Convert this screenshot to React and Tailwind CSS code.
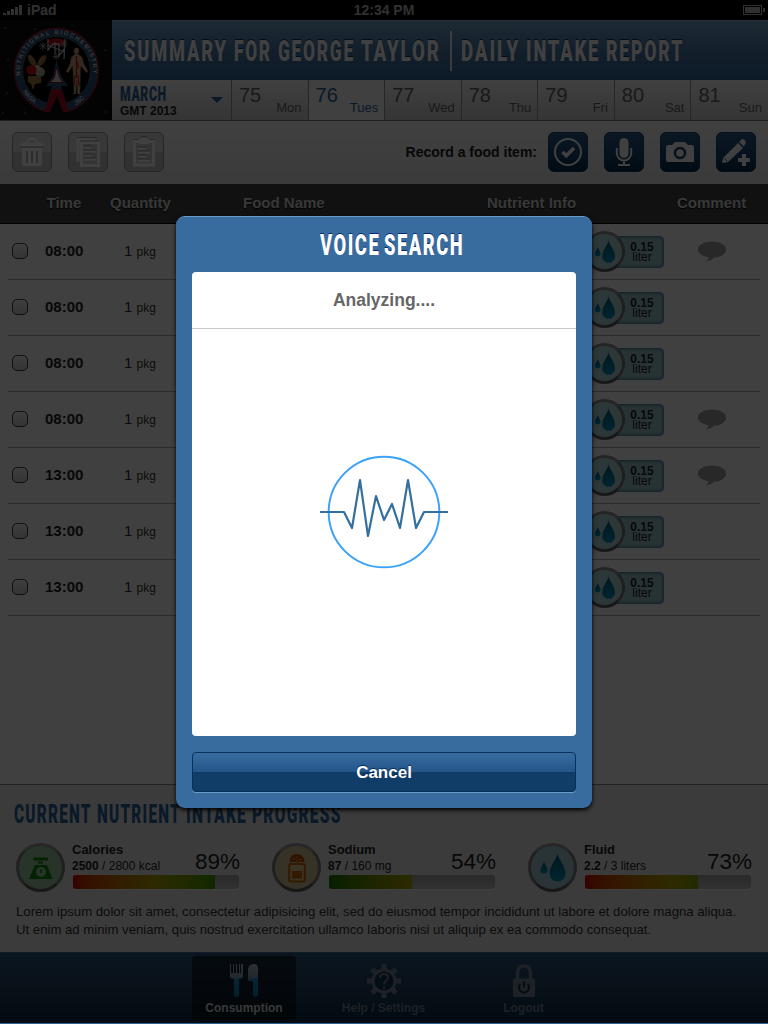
import { useLayoutEffect, useRef, useState } from "react";

/* One word of the condensed headline face, squeezed to a set width. */
function Word({ children, width, className = "" }) {
  const ref = useRef(null);
  const [scale, setScale] = useState(0.6);
  useLayoutEffect(() => {
    if (ref.current) setScale(width / ref.current.offsetWidth);
  }, [width]);
  return (
    <span className="block shrink-0 whitespace-nowrap" style={{ width }}>
      <span
        ref={ref}
        className={`block w-max origin-left whitespace-nowrap ${className}`}
        style={{ transform: `scaleX(${scale})` }}
      >
        {children}
      </span>
    </span>
  );
}

function Drops({ className }) {
  return (
    <svg viewBox="0 0 26 30" className={className}>
      <defs>
        <linearGradient id="drop" x1="0" y1="0" x2="0" y2="1">
          <stop offset="0" stopColor="#005a80" />
          <stop offset="1" stopColor="#0098b8" />
        </linearGradient>
      </defs>
      <path d="M17.5 1C19 7 25.5 13 25.5 20.500A8 8 0 0 1 9.500 20.500C9.500 13 16 7 17.500 1Z" fill="url(#drop)" />
      <path d="M4 8.500C4.600 11.500 7.500 14 7.500 17.500A3.600 3.800 0 0 1 .4 17.500C.4 14 3.400 11.500 4 8.500Z" fill="url(#drop)" />
    </svg>
  );
}

function Logo() {
  const stars = [[5, 8], [14, 22], [22, 5], [35, 9], [80, 5], [97, 12], [105, 30], [108, 55], [100, 78], [8, 40], [4, 62], [12, 80], [25, 93], [36, 96], [86, 94], [106, 92], [92, 6], [48, 3], [3, 93], [77, 97], [101, 44], [7, 73]];
  return (
    <svg viewBox="0 0 112 100" className="block h-[100px] w-28 shrink-0 bg-[#0c0e0e]">
      <defs>
        <path id="arcTop" d="M20.200 55.500A36.600 36.600 0 1 1 92.800 55.500" />
        <path id="arcLeft" d="M20 66A39.500 39.500 0 0 0 44 88.500" />
        <path id="arcRight" d="M68 88.500A39.500 39.500 0 0 0 93 66" />
      </defs>
      {stars.map(([x, y], i) => (
        <circle key={i} cx={x} cy={y} r={i % 3 ? 0.4 : 0.7} fill="#8a9090" />
      ))}
      <circle cx="56.500" cy="50.500" r="38" fill="#000" stroke="#27517c" strokeWidth="7.500" />
      <circle cx="56.500" cy="50.500" r="42" fill="none" stroke="#a01c30" strokeWidth="1.300" />
      <circle cx="56.500" cy="50.500" r="34" fill="none" stroke="#7a8290" strokeWidth=".7" />
      <g fill="#d8d8d8" fontFamily="Liberation Sans, sans-serif" fontWeight="700" fontSize="6">
        <text><textPath href="#arcTop" textLength="122">NUTRITIONAL BIOCHEMISTRY</textPath></text>
        <text><textPath href="#arcLeft" startOffset="6">NASA</textPath></text>
        <text><textPath href="#arcRight" startOffset="8">JSC</textPath></text>
      </g>
      <path d="M47 21Q56 15 65 21L62 26H51Z" fill="#c00818" />
      <path d="M48 19V31M65 19L64 39M48 25L64 32M48 30L53 24H59V36L65 28M55 22V34" fill="none" stroke="#bdc3c9" strokeWidth="1.300" />
      <path d="M43 22V30M39 26H47M40 23L46 29M46 23L40 29M56 33V40M52.500 36.500H59.500M53.500 34L58.500 39M58.500 34L53.500 39M64 20V28M60 24H68M61 21L67 27M67 21L61 27" stroke="#b8b8b8" strokeWidth=".7" />
      <g fill="#9c7440" stroke="#4c3214" strokeWidth=".5">
        <ellipse cx="32" cy="40.500" rx="3" ry="6.500" transform="rotate(-32 32 40.500)" />
        <ellipse cx="42" cy="40.500" rx="3" ry="6.500" transform="rotate(35 42 40.500)" />
      </g>
      <circle cx="40" cy="52" r="5" fill="#b5aa94" />
      <circle cx="37" cy="48" r="3" fill="#c8c0aa" />
      <circle cx="31.500" cy="50" r="5" fill="#d01010" />
      <path d="M28 56H41V63L35 64L33 70L31 64L28 62Z" fill="#ad7b3c" />
      <g fill="#c6a383" stroke="#79523c" strokeWidth=".4">
        <ellipse cx="76.500" cy="31" rx="2.500" ry="3.200" />
        <path d="M75 34H78L82 37L84 44L88 51L86.500 53L81 46L80.500 53L80 73L81 74H77.500L76.800 60L76 74H73L74 72L73 53L72.500 46L68 53L66 51.500L70 44L71.500 37Z" />
      </g>
      <path d="M76.500 36V58M76.500 40L78.500 47L76 49M74 66L75 55M79 66L78 55" stroke="#c01818" strokeWidth="1.200" fill="none" />
      <path d="M56.500 40L61 56L68 66H61L69 92H44L52 66H46L53 56Z" fill="#27517c" />
      <path d="M56.500 45L60 57L64 63H49L54 57Z" fill="#901828" />
      <path d="M56.500 49L59 57L62 62H51L55 57Z" fill="#c9cdd2" />
      <path d="M52 69H61.500L69 92H44Z" fill="#a80c20" />
      <path d="M56.800 76L63.500 93H49.500Z" fill="#080a0c" />
    </svg>
  );
}

const days = [["75", "Mon"], ["76", "Tues"], ["77", "Wed"], ["78", "Thu"], ["79", "Fri"], ["80", "Sat"], ["81", "Sun"]];

function Header() {
  const w = "text-[30px] leading-[60px] font-black tracking-[3px] text-white [text-shadow:0_-1px_0_#063868]";
  return (
    <header className="flex h-[101px] border-b border-[#777]">
      <Logo />
      <div className="min-w-0 flex-1">
        <h1 className="flex h-[60px] items-center border-t border-[#98c0dc] bg-linear-to-b from-[#76a6cc] via-[#4a7cab] to-[#34689c] pl-[11.500px] font-[Roboto,sans-serif]">
          <Word width={104} className={w}>SUMMARY</Word>
          <span className="w-1.5" />
          <Word width={38} className={w}>FOR</Word>
          <span className="w-1.5" />
          <Word width={77} className={w}>GEORGE</Word>
          <span className="w-1.5" />
          <Word width={80} className={w}>TAYLOR</Word>
          <span className="mx-[9px] h-10 w-0.5 bg-[#eee]" />
          <Word width={59.5} className={w}>DAILY</Word>
          <span className="w-1.5" />
          <Word width={74} className={w}>INTAKE</Word>
          <span className="w-1.5" />
          <Word width={78} className={w}>REPORT</Word>
        </h1>
        <div className="flex h-10">
          <div className="flex w-[120px] items-center justify-between border-r border-[#999] bg-linear-to-b from-white to-[#d0d0d0] pr-2 pl-2">
            <div className="pt-px font-[Roboto,sans-serif]">
              <Word width={47} className="text-[20px] leading-[20px] font-black tracking-[1px] text-[#2a659c]">MARCH</Word>
              <div className="font-['Liberation_Sans',sans-serif] text-xs leading-[14px] font-bold text-[#222]">GMT 2013</div>
            </div>
            <span className="h-0 w-0 border-x-6 border-t-6 border-x-transparent border-t-[#2a659c]" />
          </div>
          <div className="grid flex-1 grid-cols-7">
            {days.map(([n, d], i) => (
              <div
                key={n}
                className={`relative border-[#999] pt-[5px] pl-[7px] ${i === 6 ? "" : "border-r"} ${i === 1 ? "bg-white text-[#2a659c]" : "bg-linear-to-b from-white to-[#d0d0d0] text-[#666]"}`}
              >
                <div className="text-xl leading-[21px]">{n}</div>
                <div className="absolute right-[6px] bottom-[4px] text-[13px] leading-4">{d}</div>
              </div>
            ))}
          </div>
        </div>
      </div>
    </header>
  );
}

function GreyButton({ children }) {
  return (
    <span className="block size-10 rounded-md border border-[#999] bg-linear-to-b from-[#e0e0e0] from-50% to-[#c4c4c4] to-50%">
      <svg viewBox="0 0 40 40" className="-mt-px -ml-px size-10 max-w-none">{children}</svg>
    </span>
  );
}

function BlueButton({ children }) {
  return (
    <span className="block size-10 rounded-md border border-[#0c3c68] bg-linear-to-b from-[#2c5c8c] via-[#184a78] to-[#042c48]">
      <svg viewBox="0 0 40 40" className="-mt-px -ml-px size-10 max-w-none">{children}</svg>
    </span>
  );
}

function Toolbar() {
  return (
    <div className="flex h-[63px] items-center bg-linear-to-b from-white to-[#e8e8e8] px-3 pb-px">
      <div className="flex gap-4">
        <GreyButton>
          <g fill="#fff">
            <path d="M8 14Q8 10.500 12 10.500H28Q32 10.500 32 14Z" />
            <path d="M15 10.500L17 7H23L25 10.500" fill="none" stroke="#fff" strokeWidth="2" />
            <path d="M10 16H30V32Q30 34 28 34H12Q10 34 10 32Z" />
          </g>
          <path d="M15 19V31M20 19V31M25 19V31" stroke="#aaa" strokeWidth="1.800" />
          <path d="M8 15H32" stroke="#999" />
        </GreyButton>
        <GreyButton>
          <path d="M10 30V7H27" fill="none" stroke="#fff" strokeWidth="3" />
          <path d="M13.500 10.500H30.500V33.500H13.500Z" fill="#cfcfcf" stroke="#fff" strokeWidth="3" />
          <path d="M16 15.500H23M16 19.500H28M16 23.500H24M16 27.500H28" stroke="#fff" strokeWidth="2" />
          <path d="M9 5.500H29M12 9H31M16 14H23M16 18H28M16 22H24M16 26H28" stroke="#999" />
        </GreyButton>
        <GreyButton>
          <path d="M10.500 9.500H29.500V33H10.500Z" fill="#cfcfcf" stroke="#fff" strokeWidth="3" />
          <path d="M15 7H17Q20 3 23 7H25V12H15Z" fill="#fff" />
          <path d="M14 16.500H22M14 20.500H26M14 24.500H22M14 28.500H26" stroke="#fff" strokeWidth="2" />
          <path d="M9 7.500H14M26 7.500H31M14 15H22M14 19H26M14 23H22M14 27H26M17 5.500Q20 3 23 5.500" stroke="#999" fill="none" />
        </GreyButton>
      </div>
      <span className="mr-[11px] ml-auto text-sm font-bold text-[#222]">Record a food item:</span>
      <div className="flex gap-4">
        <BlueButton>
          <circle cx="20" cy="20" r="13" fill="none" stroke="#fff" strokeWidth="2" />
          <path d="M14.500 20L18.300 23.700L26 16" fill="none" stroke="#fff" strokeWidth="3.600" />
        </BlueButton>
        <BlueButton>
          <rect x="15.500" y="6" width="9" height="20" rx="4.500" fill="#fff" />
          <path d="M12.800 16V21A7.200 7.500 0 0 0 27.200 21V16M20 29V33M14 33H26" fill="none" stroke="#fff" strokeWidth="2" />
        </BlueButton>
        <BlueButton>
          <path d="M6 15.500Q6 13 8.500 13H12L15 10H25L28 13H31.500Q34 13 34 15.500V30H8Q6 30 6 28Z" fill="#fff" />
          <circle cx="20" cy="21" r="5" fill="#fff" stroke="#123f68" strokeWidth="2.400" />
        </BlueButton>
        <BlueButton>
          <path d="M6 30L7.500 25.500L22 11L27 16L12 30L7 31ZM23 10L25.500 7.500Q27 6.500 28.500 8L29.500 9.500Q30 11 29 12.500L27.800 14.500Z" fill="#fff" />
          <path d="M8.500 26.500L11 29" stroke="#123f68" />
          <path d="M28 22V34M22 28H34" stroke="#fff" strokeWidth="4" />
        </BlueButton>
      </div>
    </div>
  );
}

const rows = [["08:00", true], ["08:00", false], ["08:00", false], ["08:00", true], ["13:00", true], ["13:00", false], ["13:00", false]];

function IntakeTable() {
  return (
    <div>
      <div className="flex h-10 items-center border-b border-black bg-[#444] text-[15px] font-bold text-[#e0e0e0] [text-shadow:0_1px_1px_#000]">
        <span className="ml-[46.500px] w-[63.500px]">Time</span>
        <span className="w-[133px]">Quantity</span>
        <span className="w-[244px]">Food Name</span>
        <span className="w-[190px]">Nutrient Info</span>
        <span>Comment</span>
      </div>
      {rows.map(([time, comment], i) => (
        <div key={i} className="mx-2 flex h-14 items-center border-b border-[#aaa] pl-1 text-[#222]">
          <span className="mb-px size-4 rounded-[5px] border border-[#444] bg-linear-to-b from-[#f8f8f8] to-[#cfcfcf]" />
          <span className="mb-px ml-[17px] w-[79px] text-[15px] leading-5 font-bold">{time}</span>
          <span className="mb-px w-[460px] text-[15px] leading-5 text-[#333]">1 <span className="text-xs leading-none">pkg</span></span>
          <span className="flex items-center">
            <span className="z-1 flex size-[41px] items-center justify-center rounded-full border-3 border-[#7c7c7c] border-t-[#949494] border-b-[#606060] bg-[#b4dce0]">
              <Drops className="h-6 w-[22px]" />
            </span>
            <span className="-ml-5 flex h-8 w-[59px] flex-col items-center rounded border border-[#66919c] bg-[#9cc8d4] pt-[5px] pl-[15px] text-xs leading-[10px] shadow-[inset_0_0_3px_#456f7a]">
              <b>0.15</b>
              <span>liter</span>
            </span>
          </span>
          {comment && (
            <svg viewBox="0 0 28 21" className="ml-[34px] h-[21px] w-7">
              <path d="M14 0.500C22 .5 28 4 28 8.500C28 13 23 16.400 16 16.600C14.500 18.500 11.500 20.300 8 20.500C10 19 10.500 17.500 10.500 16.200C4 15.200 0 12.400 0 8.500C0 4 6 .5 14 .5Z" fill="#a0a0a0" />
            </svg>
          )}
        </div>
      ))}
    </div>
  );
}

function Nutrient({ name, value, total, percent, ring, icon, fill, bar }) {
  return (
    <div className="flex h-[50px] w-56">
      <span className={`mt-px flex size-[49px] shrink-0 items-center justify-center rounded-full border-3 border-[#808080] border-t-[#9c9c9c] border-b-[#606060] ${ring}`}>{icon}</span>
      <div className="ml-[7px] w-[168px]">
        <div className="text-[13px] leading-4 font-bold text-[#222]">{name}</div>
        <div className="flex h-4 items-end justify-between text-[#222]">
          <span className="text-xs leading-4"><b>{value}</b> / {total}</span>
          <span className="text-[22.500px] leading-[24px]">{percent}</span>
        </div>
        <div className="mt-px ml-px h-3.5 w-[166px] overflow-hidden rounded-[3px] bg-linear-to-b from-[#a8a8a8] to-[#c4c4c4] shadow-[0_1px_0_#fff]">
          <div className={`h-full ${bar}`} style={{ width: fill }} />
        </div>
      </div>
    </div>
  );
}

function Progress() {
  const w = "text-[25px] leading-[28px] font-black tracking-[2px] text-[#2a659c]";
  return (
    <section className="h-[168px] border-t border-[#888] bg-[#ececec] px-4 pt-4">
      <h2 className="-ml-0.5 flex gap-[5px] font-[Roboto,sans-serif]">
        <Word width={78} className={w}>CURRENT</Word>
        <Word width={84} className={w}>NUTRIENT</Word>
        <Word width={61} className={w}>INTAKE</Word>
        <Word width={90} className={w}>PROGRESS</Word>
      </h2>
      <div className="mt-[13px] flex gap-8">
        <Nutrient
          name="Calories" value="2500" total="2800 kcal" percent="89%" fill="85.7%" ring="bg-[#a0d0a8]"
          bar="bg-linear-to-r from-[#d40000] via-[#b0a800] via-60% to-[#3ca000]"
          icon={
            <svg viewBox="0 0 24 24" className="size-6 overflow-visible">
              <path d="M4.500 1.500H19V4.500H4.500ZM9 5.500H14V7.500H9ZM6 9H18L23.500 23H0Z" fill="#088808" />
              <circle cx="12" cy="16" r="5" fill="#9ccca4" />
              <path d="M12 13V17" stroke="#088808" strokeWidth="1.500" />
            </svg>
          }
        />
        <Nutrient
          name="Sodium" value="87" total="160 mg" percent="54%" fill="50%" ring="bg-[#dcc898]"
          bar="bg-linear-to-r from-[#107c00] to-[#b0a800]"
          icon={
            <svg viewBox="0 0 20 30" className="h-[30px] w-5">
              <path d="M2.500 9Q3 1 10 1Q17 1 17.500 9Z" fill="#c84800" />
              <path d="M6 6h1.500M9.500 4H11M12.500 6.500H14M9 7.500h1.500" stroke="#eac48c" strokeWidth="1.200" />
              <rect x="2.200" y="11" width="15.600" height="17.500" rx="2" fill="#e8c890" stroke="#c86400" strokeWidth="2" />
              <path d="M5 18H15V25.500H5Z" fill="#c86400" />
            </svg>
          }
        />
        <Nutrient
          name="Fluid" value="2.2" total="3 liters" percent="73%" fill="68%" ring="bg-[#a8d0d8]"
          bar="bg-linear-to-r from-[#d40000] via-[#b0a800] via-78% to-[#88a800]"
          icon={<Drops className="h-[30px] w-[26px]" />}
        />
      </div>
      <p className="mt-[11px] text-[13.200px] leading-[18px] tracking-[-0.010px] whitespace-nowrap text-[#333]">
        Lorem ipsum dolor sit amet, consectetur adipisicing elit, sed do eiusmod tempor incididunt ut labore et dolore magna aliqua.
        <br />
        Ut enim ad minim veniam, quis nostrud exercitation ullamco laboris nisi ut aliquip ex ea commodo consequat.
      </p>
    </section>
  );
}

function TabBar() {
  return (
    <nav className="flex h-[71px] justify-center gap-9 border-t border-[#3c6c94] bg-linear-to-b from-[#2c5880] via-[#244262] via-50% to-[#062c44] pt-[3px] text-xs font-bold text-[#708090]">
      <div className="flex h-16 w-26 flex-col items-center rounded bg-black/50 pt-[7px] text-[#ddd]">
        <svg viewBox="0 0 30 35" className="h-[35px] w-[30px]">
          <defs>
            <linearGradient id="cutlery" x1="0" y1="0" x2="0" y2="34" gradientUnits="userSpaceOnUse">
              <stop offset="0" stopColor="#b8c8d8" />
              <stop offset=".45" stopColor="#7d99b4" />
              <stop offset=".46" stopColor="#1c98d4" />
              <stop offset="1" stopColor="#087ca8" />
            </linearGradient>
          </defs>
          <path d="M1 1H2V10H4V1H5V10H7V1H8V10H10V1H11V10H12V1H14V13Q14 16 10 16V32Q10 34 7.500 34Q5 34 5 32V16Q1 16 1 13ZM19 18V7Q19 1 25 1Q29 1 29 5V31Q29 34 26.500 34Q24 34 24 31V18Z" fill="url(#cutlery)" />
        </svg>
        <span className="mt-[3px] leading-[14px]">Consumption</span>
      </div>
      <div className="flex h-16 w-26 flex-col items-center pt-[7px]">
        <svg viewBox="0 0 34 34" className="mt-px h-[34px] w-[34px]">
          <g stroke="#788494" strokeWidth="5">
            <path d="M17 0V34M0 17H34M5 5L29 29M29 5L5 29" />
          </g>
          <circle cx="17" cy="17" r="11" fill="#163550" stroke="#788494" strokeWidth="3" />
          <path d="M13 14Q13 10 17 10Q21 10 21 13.500Q21 15.500 18.800 17Q17 18.300 17 20.500M17 22.500V25" fill="none" stroke="#788494" strokeWidth="1.800" />
        </svg>
        <span className="mt-[3px] -ml-px leading-[14px]">Help / Settings</span>
      </div>
      <div className="flex h-16 w-26 flex-col items-center pt-[7px]">
        <svg viewBox="0 0 24 34" className="mt-px h-[34px] w-6">
          <path d="M5.500 16V9Q5.500 2 12 2Q18.500 2 18.500 9V16" fill="none" stroke="#788494" strokeWidth="3.500" />
          <rect x="1" y="14.500" width="22" height="18.500" rx="1.500" fill="#788494" />
          <path d="M8.500 20A5 5 0 1 0 15.500 20M12 17.500V23.500" fill="none" stroke="#10304c" strokeWidth="2" />
        </svg>
        <span className="mt-[3px] -ml-px leading-[14px]">Logout</span>
      </div>
    </nav>
  );
}

function VoiceSearch() {
  const w = "text-[30px] leading-[52px] font-black tracking-[2.500px] text-white [text-shadow:0_-1px_0_#052a70]";
  return (
    <div className="h-[592px] w-[416px] rounded-[9px] border-t border-[#6c9cc8] bg-[#386c9f] px-4 shadow-[0_2px_4px_#000]">
      <h2 className="flex h-[55px] items-center justify-center gap-[4px] pl-4 font-[Roboto,sans-serif]">
        <Word width={60} className={w}>VOICE</Word>
        <Word width={80} className={w}>SEARCH</Word>
      </h2>
      <div className="h-[464px] rounded bg-white">
        <div className="flex h-[57px] items-center justify-center border-b border-[#c8c8c8] text-[17.500px] font-bold text-[#666]">Analyzing....</div>
        <div className="flex justify-center pt-[123px]">
          <svg viewBox="0 0 136 120" className="h-[120px] w-[136px]">
            <circle cx="68" cy="60" r="55.300" fill="none" stroke="#3ca2fc" strokeWidth="2" />
            <path d="M4 60H28L36 76L44 28L52 84L60 44L68 68L76 52L84 76L92 28L100 76L108 60H132" fill="none" stroke="#34709f" strokeWidth="2.200" strokeLinejoin="round" />
          </svg>
        </div>
      </div>
      <button className="mt-4 block h-10 w-full rounded border border-[#07305a] bg-linear-to-b from-[#386c9f] via-[#24558a] via-50% to-[#103c68] to-50% pt-0.5 text-[17px] font-bold text-white shadow-[0_1px_0_#6c9cc8] [text-shadow:0_-1px_1px_#052a50]">
        Cancel
      </button>
    </div>
  );
}

export default function App() {
  return (
    <div className="relative h-[1024px] w-[768px] overflow-hidden bg-[#2c6090] font-['Liberation_Sans',Arial,sans-serif]">
      <div className="flex h-[1023px] flex-col bg-white">
        <div className="grid h-5 grid-cols-3 items-center bg-black px-[3px] text-sm leading-5 font-bold text-[#c0c0c0]">
          <div className="flex items-center gap-[5px]">
            <span className="flex h-[10px] items-end gap-px">
              <i className="h-0.5 w-[3px] bg-[#c0c0c0]" />
              <i className="h-1 w-[3px] bg-[#c0c0c0]" />
              <i className="h-1.5 w-[3px] bg-[#c0c0c0]" />
              <i className="h-2 w-[3px] bg-[#c0c0c0]" />
              <i className="h-2.5 w-[3px] bg-[#c0c0c0]" />
            </span>
            iPad
          </div>
          <div className="text-center">12:34 PM</div>
          <svg viewBox="0 0 22 10" className="h-2.5 w-[22px] justify-self-end">
            <rect x=".5" y=".5" width="18" height="9" fill="none" stroke="#c0c0c0" />
            <path d="M2 2H17V8H2ZM20 3H22V7H20Z" fill="#c0c0c0" />
          </svg>
        </div>
        <Header />
        <Toolbar />
        <IntakeTable />
        <div className="mt-auto">
          <Progress />
          <TabBar />
        </div>
      </div>
      <div className="absolute inset-x-0 top-0 z-10 flex h-[1023px] items-start justify-center bg-black/75 pt-[216px]">
        <VoiceSearch />
      </div>
    </div>
  );
}
